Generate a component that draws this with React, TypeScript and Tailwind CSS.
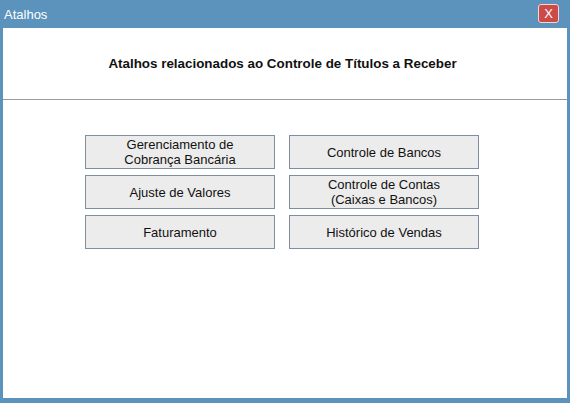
import React from "react";

const atalhos: string[][] = [
  ["Gerenciamento de", "Cobrança Bancária"],
  ["Controle de Bancos"],
  ["Ajuste de Valores"],
  ["Controle de Contas", "(Caixas e Bancos)"],
  ["Faturamento"],
  ["Histórico de Vendas"],
];

export default function App() {
  return (
    <div
      className="w-[570px] h-[403px] bg-[#5b93bd] flex flex-col"
      style={{ fontFamily: '"Liberation Sans", Arial, sans-serif' }}
    >
      {/* TITLE BAR */}
      <div className="h-[28px] flex items-center justify-between pl-[4px] pr-[11px]">
        <span className="text-white text-[13px] leading-none">Atalhos</span>
        <button className="w-[21px] h-[19px] mt-[-1px] rounded-[3px] border border-[#f3d6d6] bg-[#cc4a48] text-white text-[13px] leading-none flex items-center justify-center">
          X
        </button>
      </div>
      {/* CONTENT */}
      <div className="flex-1 mx-[3px] mb-[5px] bg-white flex flex-col">
        <div className="h-[71px] pt-[28px] pr-[5px] text-center">
          <h1 className="text-[13.4px] leading-[16px] font-bold text-[#111]">
            Atalhos relacionados ao Controle de Títulos a Receber
          </h1>
        </div>
        <div className="h-px bg-[#9a9a9a]" />
        <div className="pt-[35px] pl-[82px]">
          <div className="grid grid-cols-[190px_190px] gap-x-[14px] gap-y-[6px]">
            {atalhos.map((linhas) => (
              <button
                key={linhas.join(" ")}
                className="h-[34px] bg-[#ececec] border border-[#7f8fa3] flex flex-col items-center justify-center text-[13px] leading-[15px] text-[#111]"
              >
                {linhas.map((l) => (
                  <span key={l}>{l}</span>
                ))}
              </button>
            ))}
          </div>
        </div>
      </div>
    </div>
  );
}
